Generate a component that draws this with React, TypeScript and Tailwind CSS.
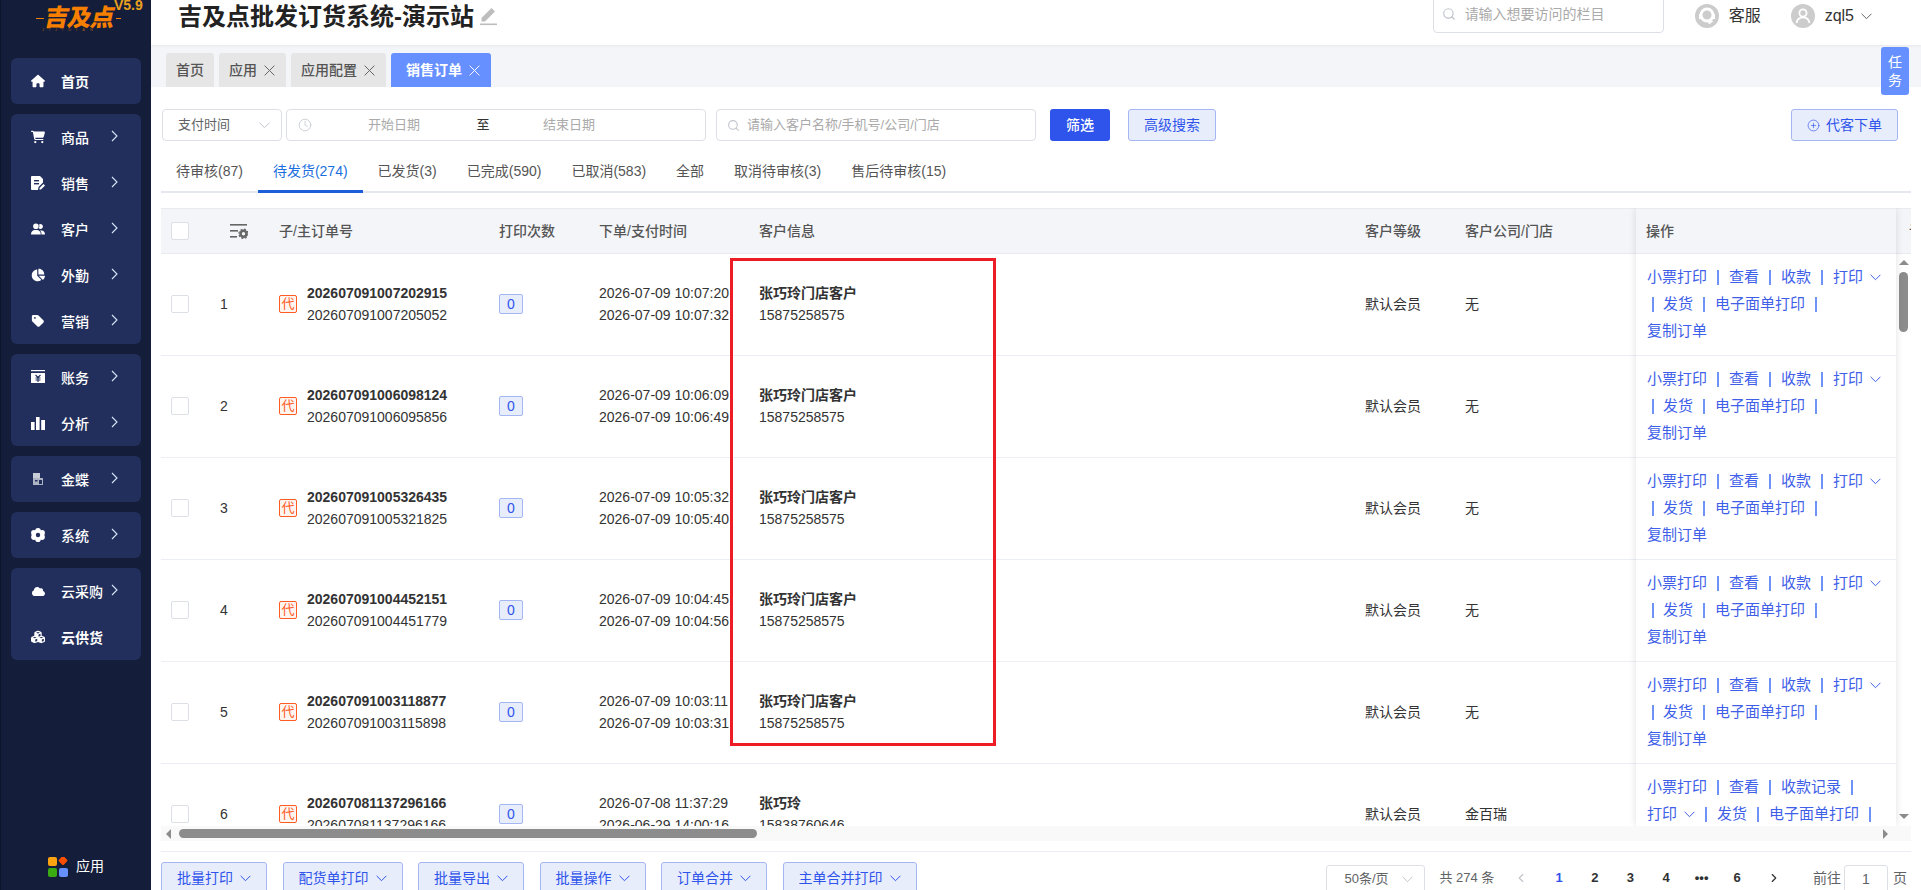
import { ChevronLeft, ChevronRight, CirclePlus, Clock, Search } from "lucide-react"
import { FaCartShopping, FaChartPie, FaCloud, FaCubes, FaHouse, FaTag, FaUserGroup } from "react-icons/fa6"
import type { ReactNode } from "react"

const Chev = ({ className = "" }: { className?: string }) => (
  <svg width="11" height="7" viewBox="0 0 11 7" fill="none" stroke="currentColor" className={`shrink-0 ${className}`}>
    <path d="M.6.8 5.500 5.700 10.400.8" />
  </svg>
)

const CloseMark = ({ className = "" }: { className?: string }) => (
  <svg width="11" height="11" viewBox="0 0 11 11" fill="none" stroke="currentColor" className={`shrink-0 ${className}`}>
    <path d="M.6.6 10.400 10.400M10.400.6.6 10.400" />
  </svg>
)

const MenuArrow = () => (
  <svg width="7" height="12" viewBox="0 0 7 12" fill="none" stroke="#d8e6f8" strokeWidth="1.1" className="-mt-[3px]">
    <path d="M1 1l5 5-5 5" />
  </svg>
)

const EditMark = () => (
  <svg width="17" height="18" viewBox="0 0 17 18" className="mt-[8px] ml-[6px]" fill="#bdbdbd">
    <path d="M11.500 0 15 3.500 5 13.500H1.500V10z" />
    <rect x="0" y="15.500" width="17" height="1.600" />
  </svg>
)

const DocIcon = () => (
  <svg width="14" height="14" viewBox="0 0 14 14" fill="#fff">
    <path d="M1 0h8l3 3v3.500L7.500 11 7 14H1a1 1 0 0 1-1-1V1a1 1 0 0 1 1-1z" />
    <rect x="3" y="4" width="5" height="1.400" fill="#222f5c" />
    <rect x="3" y="7" width="5" height="1.400" fill="#222f5c" />
    <path d="M12.500 8 14 9.500 10 13.600H8.500V12z" />
  </svg>
)

const AccountIcon = () => (
  <svg width="14" height="14" viewBox="0 0 14 14" fill="#fff">
    <rect x="0" y="0" width="14" height="1.200" />
    <rect x="0" y="3" width="14" height="10" rx="0.5" />
    <path d="M4.500 5 7 7.500 9.500 5M4.500 8h5M4.500 10h5M7 7.500V12" stroke="#222f5c" strokeWidth="1.1" fill="none" />
  </svg>
)

const BarsIcon = () => (
  <svg width="14" height="14" viewBox="0 0 14 14" fill="#fff">
    <rect x="0" y="6" width="3.600" height="8" />
    <rect x="5" y="1" width="3.600" height="13" />
    <rect x="10.200" y="4" width="3.800" height="10" />
  </svg>
)

const KingdeeIcon = () => (
  <svg width="14" height="14" viewBox="0 0 14 14">
    <rect x="2" y="1" width="7" height="5" fill="#c9cdd8" />
    <rect x="2" y="6" width="10" height="7" fill="#aeb3c4" />
    <rect x="8" y="8" width="3" height="4" fill="#222f5c" />
    <rect x="4" y="8" width="2.500" height="1.500" fill="#222f5c" />
  </svg>
)

const GearIcon = () => (
  <svg width="14" height="14" viewBox="0 0 14 14" fill="#fff">
    <circle cx="7" cy="2.800" r="2.800" />
    <circle cx="7" cy="11.200" r="2.800" />
    <circle cx="2.900" cy="4.900" r="2.800" />
    <circle cx="11.100" cy="4.900" r="2.800" />
    <circle cx="2.900" cy="9.100" r="2.800" />
    <circle cx="11.100" cy="9.100" r="2.800" />
    <circle cx="7" cy="7" r="3" />
    <circle cx="7" cy="7" r="2.200" fill="#222f5c" />
  </svg>
)

const ColumnSetIcon = () => (
  <svg width="18" height="15" viewBox="0 0 18 15" fill="#666">
    <rect x="0" y="0" width="17" height="1.600" />
    <rect x="0" y="6" width="8" height="1.600" />
    <rect x="0" y="12" width="7" height="1.600" />
    <circle cx="13.500" cy="9.800" r="3" fill="none" stroke="#666" strokeWidth="2.600" />
    <circle cx="13.500" cy="9.800" r="4.600" fill="none" stroke="#666" strokeWidth="1.200" strokeDasharray="2 1.600" />
  </svg>
)

const AppsIcon = () => (
  <svg width="20" height="20" viewBox="0 0 20 20">
    <rect x="0" y="0" width="9" height="9" rx="2" fill="#fca311" />
    <rect x="11.500" y="0" width="7" height="7" rx="1.500" fill="#fa4e00" transform="rotate(45 15 3.500)" />
    <rect x="0" y="11" width="9" height="9" rx="2" fill="#3aac12" />
    <rect x="11" y="11" width="9" height="9" rx="2" fill="#6690ff" />
  </svg>
)

const ServiceIcon = () => (
  <svg width="24" height="24" viewBox="0 0 24 24">
    <circle cx="12" cy="12" r="12" fill="#cccccc" />
    <circle cx="12" cy="11" r="6" fill="none" stroke="#fff" strokeWidth="3" />
    <path d="M5 10v5M19 10v5M17.500 17l-4 2.500" stroke="#fff" strokeWidth="2" fill="none" />
  </svg>
)

const UserIcon = () => (
  <svg width="24" height="24" viewBox="0 0 24 24">
    <circle cx="12" cy="12" r="12" fill="#cccccc" />
    <circle cx="12" cy="9" r="3.600" fill="none" stroke="#fff" strokeWidth="1.800" />
    <path d="M5.500 19c.8-4 3.200-5.600 6.500-5.600s5.700 1.600 6.500 5.600" fill="none" stroke="#fff" strokeWidth="1.800" />
  </svg>
)

type MenuItem = { icon: ReactNode; label: string; arrow?: boolean; bold?: boolean }

const menuGroups: MenuItem[][] = [
  [{ icon: <FaHouse size={14} />, label: "首页", bold: true }],
  [
    { icon: <FaCartShopping size={14} />, label: "商品", arrow: true },
    { icon: <DocIcon />, label: "销售", arrow: true },
    { icon: <FaUserGroup size={14} />, label: "客户", arrow: true },
    { icon: <FaChartPie size={14} />, label: "外勤", arrow: true },
    { icon: <FaTag size={14} />, label: "营销", arrow: true },
  ],
  [
    { icon: <AccountIcon />, label: "账务", arrow: true },
    { icon: <BarsIcon />, label: "分析", arrow: true },
  ],
  [{ icon: <KingdeeIcon />, label: "金蝶", arrow: true }],
  [{ icon: <GearIcon />, label: "系统", arrow: true }],
  [
    { icon: <FaCloud size={13} />, label: "云采购", arrow: true },
    { icon: <FaCubes size={14} />, label: "云供货", bold: true },
  ],
]

const rows = [
  { id: 1, sub: "202607091007202915", main: "202607091007205052", t1: "2026-07-09 10:07:20", t2: "2026-07-09 10:07:32" },
  { id: 2, sub: "202607091006098124", main: "202607091006095856", t1: "2026-07-09 10:06:09", t2: "2026-07-09 10:06:49" },
  { id: 3, sub: "202607091005326435", main: "202607091005321825", t1: "2026-07-09 10:05:32", t2: "2026-07-09 10:05:40" },
  { id: 4, sub: "202607091004452151", main: "202607091004451779", t1: "2026-07-09 10:04:45", t2: "2026-07-09 10:04:56" },
  { id: 5, sub: "202607091003118877", main: "202607091003115898", t1: "2026-07-09 10:03:11", t2: "2026-07-09 10:03:31" },
  {
    id: 6,
    sub: "202607081137296166",
    main: "202607081137296166",
    t1: "2026-07-08 11:37:29",
    t2: "2026-06-29 14:00:16",
    name: "张巧玲",
    phone: "15838760646",
    company: "金百瑞",
  },
]

const statusTabs = ["待审核(87)", "待发货(274)", "已发货(3)", "已完成(590)", "已取消(583)", "全部", "取消待审核(3)", "售后待审核(15)"]
const batchButtons = ["批量打印", "配货单打印", "批量导出", "批量操作", "订单合并", "主单合并打印"]

const Sep = ({ first }: { first?: boolean }) => (
  <span className={`h-[15px] w-[2px] bg-[#6f92f5] ${first ? "ml-[5px] mr-[9px]" : "mx-[10px]"}`} />
)

const PrintLink = () => (
  <span className="flex items-center">
    打印
    <Chev className="ml-[7px]" />
  </span>
)

const Sidebar = () => (
  <aside className="relative flex h-full w-[151px] shrink-0 flex-col overflow-hidden border-l border-[#0c1428] bg-[#141e3a] text-white">
    <div className="relative h-[58px] shrink-0">
      <div className="flex h-[36px] items-center pl-[35px]">
        <span className="h-px w-[8px] bg-[#f77f00]" />
        <span className="mx-[1px] inline-block w-[70px] -skew-x-12 text-[24px] leading-none font-black tracking-[-1px] text-[#f77f00]">
          吉及点
        </span>
        <span className="h-px w-[5px] bg-[#f77f00]" />
      </div>
      <span className="absolute top-[-5px] left-[113px] text-[14px] font-bold text-[#e8a020]">V5.9</span>
      <span className="absolute top-[27px] left-[41px] text-[4px] tracking-[5px] text-[#a05a10]">JIJIDIAN</span>
    </div>
    <nav className="flex flex-col gap-[10px] px-[10px]">
      {menuGroups.map((group, i) => (
        <div key={i} className="rounded-[6px] bg-[#222f5c]">
          {group.map((item) => (
            <div key={item.label} className="flex h-[46px] items-center pl-[20px]">
              <span className="flex w-[14px] justify-center">{item.icon}</span>
              <span className={`mt-[2px] ml-[16px] w-[50px] text-[14px] ${item.bold ? "font-bold" : "font-medium"}`}>{item.label}</span>
              {item.arrow && <MenuArrow />}
            </div>
          ))}
        </div>
      ))}
    </nav>
    <div className="mt-auto mb-[13px] flex items-center pl-[47px]">
      <AppsIcon />
      <span className="ml-[8px] text-[14px]">应用</span>
    </div>
  </aside>
)

const TopBar = () => (
  <header className="relative z-10 flex h-[45px] shrink-0 bg-white pl-[27px] shadow-[0_1px_3px_rgba(0,0,0,0.06)]">
    <h1 className="mt-[-1px] text-[24px] leading-[36px] font-bold text-[#222]">吉及点批发订货系统-演示站</h1>
    <EditMark />
    <div className="mt-[-5px] ml-auto flex h-[38px] w-[231px] items-center rounded-[4px] border border-[#dcdfe6] pl-[8px]">
      <Search size={14} className="text-[#c0c4cc]" />
      <span className="ml-[9px] text-[14px] text-[#aaa]">请输入想要访问的栏目</span>
    </div>
    <div className="mt-[4px] ml-[31px] flex h-[24px] items-center">
      <ServiceIcon />
      <span className="ml-[10px] text-[16px] text-[#333]">客服</span>
    </div>
    <div className="mt-[4px] mr-[49px] ml-[30px] flex h-[24px] items-center">
      <UserIcon />
      <span className="ml-[10px] text-[16px] text-[#333]">zql5</span>
      <Chev className="ml-[7px] text-[#666]" />
    </div>
  </header>
)

const PageTabs = () => (
  <div className="flex h-[42px] shrink-0 items-end gap-[5px] bg-[#f4f5f9] pl-[15px]">
    <div className="flex h-[34px] items-center rounded-t-[3px] bg-[#e6e6e6] px-[10px] text-[14px] font-medium text-[#555]">首页</div>
    {["应用", "应用配置"].map((t) => (
      <div key={t} className="flex h-[34px] items-center rounded-t-[3px] bg-[#e6e6e6] pr-[11px] pl-[10px] text-[14px] font-medium text-[#555]">
        {t}
        <CloseMark className="ml-[7px] text-[#666]" />
      </div>
    ))}
    <div className="flex h-[34px] items-center rounded-t-[3px] bg-[#6690ff] pr-[11px] pl-[15px] text-[14px] font-bold text-white">
      销售订单
      <CloseMark className="ml-[7px]" />
    </div>
  </div>
)

const FilterRow = () => (
  <div className="mt-[22px] flex h-[32px] shrink-0 items-center pr-[13px] pl-[1px] text-[13px]">
    <div className="flex h-full w-[120px] items-center justify-between rounded-[4px] border border-[#dcdfe6] pr-[11px] pl-[15px] text-[#606266]">
      支付时间
      <Chev className="text-[#c0c4cc]" />
    </div>
    <div className="ml-[4px] flex h-full w-[420px] items-center rounded-[4px] border border-[#dcdfe6] pl-[11px]">
      <Clock size={14} strokeWidth={1.3} className="shrink-0 text-[#c0c4cc]" />
      <span className="w-[164px] text-center text-[#aaa]">开始日期</span>
      <span className="w-[14px] text-center text-[#333]">至</span>
      <span className="w-[158px] text-center text-[#aaa]">结束日期</span>
    </div>
    <div className="ml-[10px] flex h-full w-[320px] items-center rounded-[4px] border border-[#dcdfe6] pl-[10px]">
      <Search size={13} className="text-[#c0c4cc]" />
      <span className="ml-[7px] text-[#aaa]">请输入客户名称/手机号/公司/门店</span>
    </div>
    <button className="ml-[14px] h-full w-[60px] rounded-[3px] bg-[#2f54eb] text-[14px] font-medium text-white">筛选</button>
    <button className="ml-[18px] h-full w-[88px] rounded-[3px] border border-[#a5b6f5] bg-[#e8edfc] text-[14px] text-[#2f54eb]">高级搜索</button>
    <button className="ml-auto flex h-full w-[107px] items-center justify-center rounded-[3px] border border-[#a5b6f5] bg-[#e8edfc] text-[14px] text-[#2f54eb]">
      <CirclePlus size={13} strokeWidth={1.2} className="mr-[6px]" />
      代客下单
    </button>
  </div>
)

const StatusTabs = () => (
  <div className="flex h-[52px] shrink-0 border-b-2 border-[#e4e7ed]">
    {statusTabs.map((t, i) => (
      <div
        key={t}
        className={`-mb-[2px] flex items-center border-b-[3px] px-[15px] pt-[12px] text-[14px] ${i === 1 ? "border-[#1c5fd8] text-[#1c6fe0]" : "border-transparent text-[#555]"}`}
      >
        {t}
      </div>
    ))}
  </div>
)

const RowOps = ({ last }: { last: boolean }) => {
  if (last) {
    return (
      <>
        <div className="flex h-[27px] items-center">
          小票打印<Sep />查看<Sep />收款记录<Sep />
        </div>
        <div className="flex h-[27px] items-center">
          <PrintLink /><Sep />发货<Sep />电子面单打印<Sep />
        </div>
      </>
    )
  }
  return (
    <>
      <div className="flex h-[27px] items-center">
        小票打印<Sep />查看<Sep />收款<Sep /><PrintLink />
      </div>
      <div className="flex h-[27px] items-center">
        <Sep first />发货<Sep />电子面单打印<Sep />
      </div>
      <div className="flex h-[27px] items-center">复制订单</div>
    </>
  )
}

const OrderTable = () => (
  <div className="relative mt-[15px] flex h-[618px] shrink-0 overflow-hidden">
    <div className="min-w-0 flex-1 overflow-hidden">
      <div className="flex h-[46px] items-center border-y border-[#e8eaf0] bg-[#f4f5f9] text-[14px] font-medium text-[#555]">
        <div className="w-[48px] pl-[10px]">
          <span className="block h-[18px] w-[18px] rounded-[2px] border border-[#dcdfe6] bg-white" />
        </div>
        <div className="w-[70px] pl-[21px]">
          <ColumnSetIcon />
        </div>
        <div className="w-[220px]">子/主订单号</div>
        <div className="w-[100px]">打印次数</div>
        <div className="w-[160px]">下单/支付时间</div>
        <div className="w-[606px]">客户信息</div>
        <div className="w-[100px]">客户等级</div>
        <div className="w-[171px]">客户公司/门店</div>
      </div>
      {rows.map((r) => (
        <div key={r.id} className="flex h-[102px] items-center border-b border-[#ebeef5] pb-[1px] text-[14px] text-[#333]">
          <div className="w-[48px] pl-[10px]">
            <span className="block h-[18px] w-[18px] rounded-[2px] border border-[#dcdfe6] bg-white" />
          </div>
          <div className="w-[70px] pl-[11px]">{r.id}</div>
          <div className="flex w-[220px] items-center">
            <span className="flex h-[18px] w-[18px] items-center justify-center rounded-[2px] border border-[#ff5a1f] bg-[#fff5f0] text-[13px] text-[#ff5a1f]">
              代
            </span>
            <div className="ml-[10px] leading-[22px]">
              <div className="font-bold text-[#333]">{r.sub}</div>
              <div>{r.main}</div>
            </div>
          </div>
          <div className="w-[100px]">
            <span className="flex h-[20px] w-[24px] items-center justify-center rounded-[2px] border border-[#a5b6f5] bg-[#e8edfc] text-[#2f54eb]">0</span>
          </div>
          <div className="w-[160px] leading-[22px]">
            <div>{r.t1}</div>
            <div>{r.t2}</div>
          </div>
          <div className="w-[606px] leading-[22px]">
            <div className="font-bold text-[#333]">{r.name ?? "张巧玲门店客户"}</div>
            <div>{r.phone ?? "15875258575"}</div>
          </div>
          <div className="w-[100px]">默认会员</div>
          <div className="w-[171px]">{r.company ?? "无"}</div>
        </div>
      ))}
    </div>
    <div className="relative z-10 w-[260px] shrink-0 overflow-hidden bg-white shadow-[0_0_8px_rgba(0,0,0,0.12)]">
      <div className="flex h-[46px] items-center border-y border-[#e8eaf0] bg-[#f4f5f9] pl-[10px] text-[14px] font-medium text-[#555]">操作</div>
      {rows.map((r) => (
        <div key={r.id} className="h-[102px] border-b border-[#ebeef5] pt-[10px] pl-[11px] text-[15px] text-[#3f5fe8]">
          <RowOps last={r.id === 6} />
        </div>
      ))}
    </div>
    <div className="flex w-[15px] shrink-0 flex-col overflow-hidden">
      <div className="flex h-[46px] shrink-0 items-center border-y border-[#e8eaf0] bg-[#f4f5f9] pl-[13px] text-[14px] font-medium whitespace-nowrap text-[#555]">
        订单
      </div>
      <span className="mt-[6px] ml-[3px] h-0 w-0 border-x-[5px] border-b-[5px] border-x-transparent border-b-[#8c8c8c]" />
      <span className="mt-[7px] ml-[3px] h-[60px] w-[9px] rounded-[5px] bg-[#8c8c8c]" />
      <span className="mt-auto mb-[7px] ml-[3px] h-0 w-0 border-x-[5px] border-t-[5px] border-x-transparent border-t-[#8c8c8c]" />
    </div>
  </div>
)

const HorizontalBar = () => (
  <div className="flex h-[15px] shrink-0 items-center bg-[#f9f9f9] pl-[5px]">
    <span className="h-0 w-0 border-y-[5px] border-r-[5px] border-y-transparent border-r-[#8c8c8c]" />
    <span className="ml-[8px] h-[9px] w-[578px] rounded-[5px] bg-[#8c8c8c]" />
    <span className="ml-[1126px] h-0 w-0 border-y-[5px] border-l-[5px] border-y-transparent border-l-[#8c8c8c]" />
  </div>
)

const BottomBar = () => (
  <div className="mt-[10px] flex flex-1 border-t border-[#ebeef5] pt-[10px]">
    <div className="flex gap-[15.5px]">
      {batchButtons.map((b) => (
        <button
          key={b}
          className="flex h-[32px] items-center gap-[7px] rounded-[3px] border border-[#a5b6f5] bg-[#e8edfc] px-[15px] text-[14px] whitespace-nowrap text-[#2f54eb]"
        >
          {b}
          <Chev />
        </button>
      ))}
    </div>
    <div className="mt-[3px] ml-auto flex h-[26px] items-start pr-[4px] text-[13px] leading-[26px] text-[#606266]">
      <div className="flex h-[32px] w-[99px] justify-between rounded-[3px] border border-[#dcdfe6] pr-[11px] pl-[17px]">
        50条/页
        <Chev className="mt-[10px] text-[#c0c4cc]" />
      </div>
      <span className="ml-[14px] w-[55px] whitespace-nowrap">共 274 条</span>
      <span className="ml-[9px] flex h-[26px] w-[36px] items-center justify-center text-[#c0c4cc]">
        <ChevronLeft size={14} />
      </span>
      <div className="ml-[2px] flex font-bold text-[#303133]">
        <span className="w-[35.6px] text-center text-[#2f54eb]">1</span>
        <span className="w-[35.6px] text-center">2</span>
        <span className="w-[35.6px] text-center">3</span>
        <span className="w-[35.6px] text-center">4</span>
        <span className="w-[35.6px] text-center">•••</span>
        <span className="w-[35.6px] text-center">6</span>
      </div>
      <span className="flex h-[26px] w-[37px] items-center justify-center text-[#303133]">
        <ChevronRight size={14} />
      </span>
      <span className="ml-[21px] text-[14px]">前往</span>
      <div className="ml-[3px] h-[32px] w-[44px] rounded-[3px] border border-[#dcdfe6] text-center text-[14px]">1</div>
      <span className="ml-[5px] text-[14px]">页</span>
    </div>
  </div>
)

export default function App() {
  return (
    <div className="relative flex h-[890px] w-full overflow-hidden bg-white font-['Liberation_Sans','Noto_Sans_CJK_SC',sans-serif]">
      <Sidebar />
      <main className="flex min-w-0 flex-1 flex-col">
        <TopBar />
        <PageTabs />
        <div className="flex min-h-0 flex-1 flex-col pr-[10px] pl-[10px]">
          <FilterRow />
          <StatusTabs />
          <OrderTable />
          <HorizontalBar />
          <BottomBar />
        </div>
      </main>
      <div className="absolute top-[47px] left-[1881px] z-20 flex h-[48px] w-[28px] flex-col items-center justify-center rounded-[3px] bg-[#6690ff] text-[14px] leading-[18px] text-white">
        <span>任</span>
        <span>务</span>
      </div>
      <div className="absolute top-[258px] left-[730px] z-20 h-[488px] w-[266px] border-[3px] border-[#ee1c25]" />
    </div>
  )
}
